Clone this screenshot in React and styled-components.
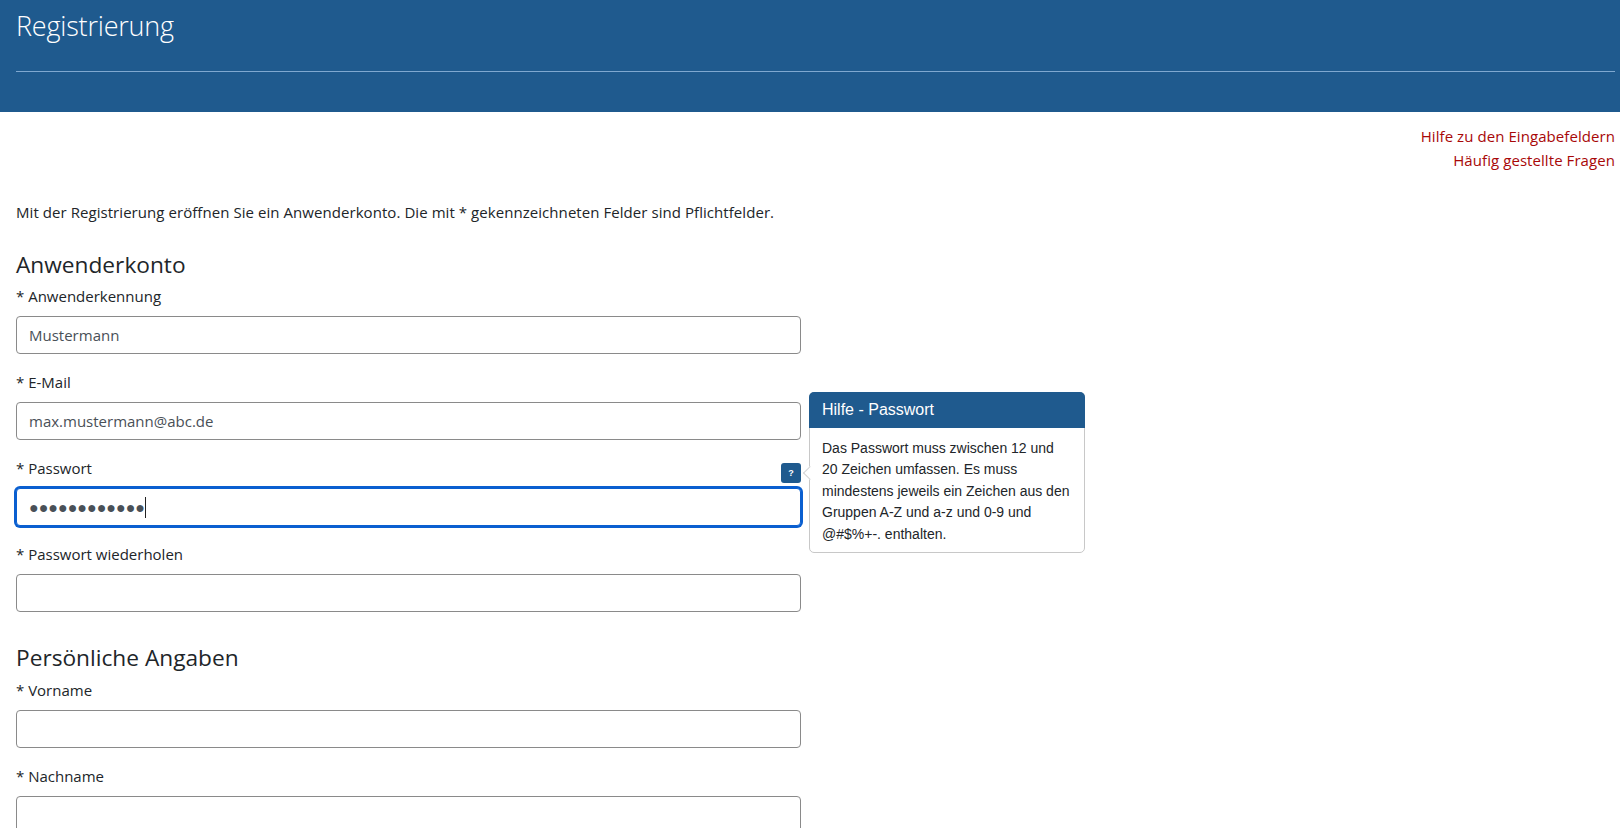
import React from "react";
import styled, { createGlobalStyle } from "styled-components";

const GlobalStyle = createGlobalStyle`
  html, body {
    margin: 0;
    padding: 0;
    background: #fff;
    height: 100%;
    overflow: hidden;
  }
  body {
    font-family: "Open Sans", "Noto Sans", sans-serif;
    font-size: 15px;
    line-height: 24px;
    color: #212529;
  }
`;

const Header = styled.header`
  height: 112px;
  box-sizing: border-box;
  padding: 0 5px 0 16px;
  background: #1f5a8e;
`;

const Title = styled.h1`
  margin: 0;
  padding-top: 6px;
  height: 64px;
  box-sizing: border-box;
  line-height: 40px;
  font-size: 27px;
  font-weight: 300;
  letter-spacing: -0.2px;
  color: #fff;
`;

const Rule = styled.hr`
  margin: 0;
  border: 0;
  height: 1px;
  margin-top: 7px;
  background: #7fa8d0;
`;

const Main = styled.main`
  padding: 12px 5px 0 16px;
`;

const HelpLinks = styled.nav`
  display: flex;
  flex-direction: column;
  align-items: flex-end;
`;

const HelpLink = styled.a`
  color: #a80808;
  text-decoration: none;
  letter-spacing: 0.07px;
`;

const Intro = styled.p`
  margin: 28px 0 26px;
  letter-spacing: 0.06px;
`;

const Form = styled.form`
  width: 785px;
`;

const SectionTitle = styled.h2`
  margin: ${(p) => (p.$spaced ? "31px" : "0")} 0 ${(p) => (p.$spaced ? "6px" : "5px")};
  font-size: 22.7px;
  line-height: 29px;
  font-weight: 400;
`;

const Field = styled.div`
  position: relative;
  margin-bottom: 16px;
`;

const Label = styled.label`
  display: block;
  margin-bottom: 8px;
`;

const Input = styled.input`
  display: block;
  width: 100%;
  height: 38px;
  box-sizing: border-box;
  padding: 0 12px;
  border: 1px solid #8a8a8a;
  border-radius: 4px;
  outline: none;
  background: #fff;
  font: inherit;
  color: #495057;
  ${(p) => p.$focused && "border: 1px solid #0a5fd0; box-shadow: 0 0 0 2px #0a5fd0; font-size: 16px;"}
`;

const Caret = styled.span`
  position: absolute;
  left: 129px;
  top: 41px;
  width: 1px;
  height: 21px;
  background: #222;
`;

const HelpButton = styled.button`
  position: absolute;
  right: 0;
  top: 7px;
  width: 20px;
  height: 20px;
  padding: 0;
  border: 0;
  border-radius: 3px;
  background: #1f5a8e;
  color: #fff;
  font: 700 9px/20px "Liberation Sans", Arial, sans-serif;
`;

const Popover = styled.aside`
  position: absolute;
  left: 793px;
  top: -64px;
  width: 276px;
  box-sizing: border-box;
  border: 1px solid #c8c8c8;
  border-radius: 5px;
  background: #fff;
  font-family: "Liberation Sans", Arial, sans-serif;

  &::before {
    content: "";
    position: absolute;
    left: -5px;
    top: 75px;
    width: 10px;
    height: 10px;
    box-sizing: border-box;
    background: #fff;
    border-left: 1px solid #d4d4d4;
    border-bottom: 1px solid #d4d4d4;
    transform: rotate(45deg);
  }
`;

const PopoverTitle = styled.h3`
  margin: -1px -1px 0;
  padding: 0 13px;
  height: 36px;
  border-radius: 5px 5px 0 0;
  background: #1f5a8e;
  color: #fff;
  font-size: 16px;
  font-weight: 400;
  line-height: 36px;
`;

const PopoverBody = styled.div`
  position: relative;
  padding: 10px 12px 7px 12px;
  font-size: 14px;
  line-height: 21.4px;
  color: #212529;
`;

const passwordDots = "●".repeat(12);

export default function App() {
  return (
    <>
      <GlobalStyle />
      <Header>
        <Title>Registrierung</Title>
        <Rule />
      </Header>
      <Main>
        <HelpLinks>
          <HelpLink href="#">Hilfe zu den Eingabefeldern</HelpLink>
          <HelpLink href="#">Häufig gestellte Fragen</HelpLink>
        </HelpLinks>
        <Intro>
          Mit der Registrierung eröffnen Sie ein Anwenderkonto. Die mit * gekennzeichneten Felder sind Pflichtfelder.
        </Intro>
        <Form>
          <SectionTitle>Anwenderkonto</SectionTitle>
          <Field>
            <Label>* Anwenderkennung</Label>
            <Input defaultValue="Mustermann" />
          </Field>
          <Field>
            <Label>* E-Mail</Label>
            <Input defaultValue="max.mustermann@abc.de" />
          </Field>
          <Field>
            <Label>* Passwort</Label>
            <Input $focused defaultValue={passwordDots} />
            <Caret />
            <HelpButton type="button">?</HelpButton>
            <Popover>
              <PopoverTitle>Hilfe - Passwort</PopoverTitle>
              <PopoverBody>
                Das Passwort muss zwischen 12 und
                <br />
                20 Zeichen umfassen. Es muss
                <br />
                mindestens jeweils ein Zeichen aus den
                <br />
                Gruppen A-Z und a-z und 0-9 und
                <br />
                @#$%+-. enthalten.
              </PopoverBody>
            </Popover>
          </Field>
          <Field>
            <Label>* Passwort wiederholen</Label>
            <Input />
          </Field>
          <SectionTitle $spaced>Persönliche Angaben</SectionTitle>
          <Field>
            <Label>* Vorname</Label>
            <Input />
          </Field>
          <Field>
            <Label>* Nachname</Label>
            <Input />
          </Field>
        </Form>
      </Main>
    </>
  );
}
